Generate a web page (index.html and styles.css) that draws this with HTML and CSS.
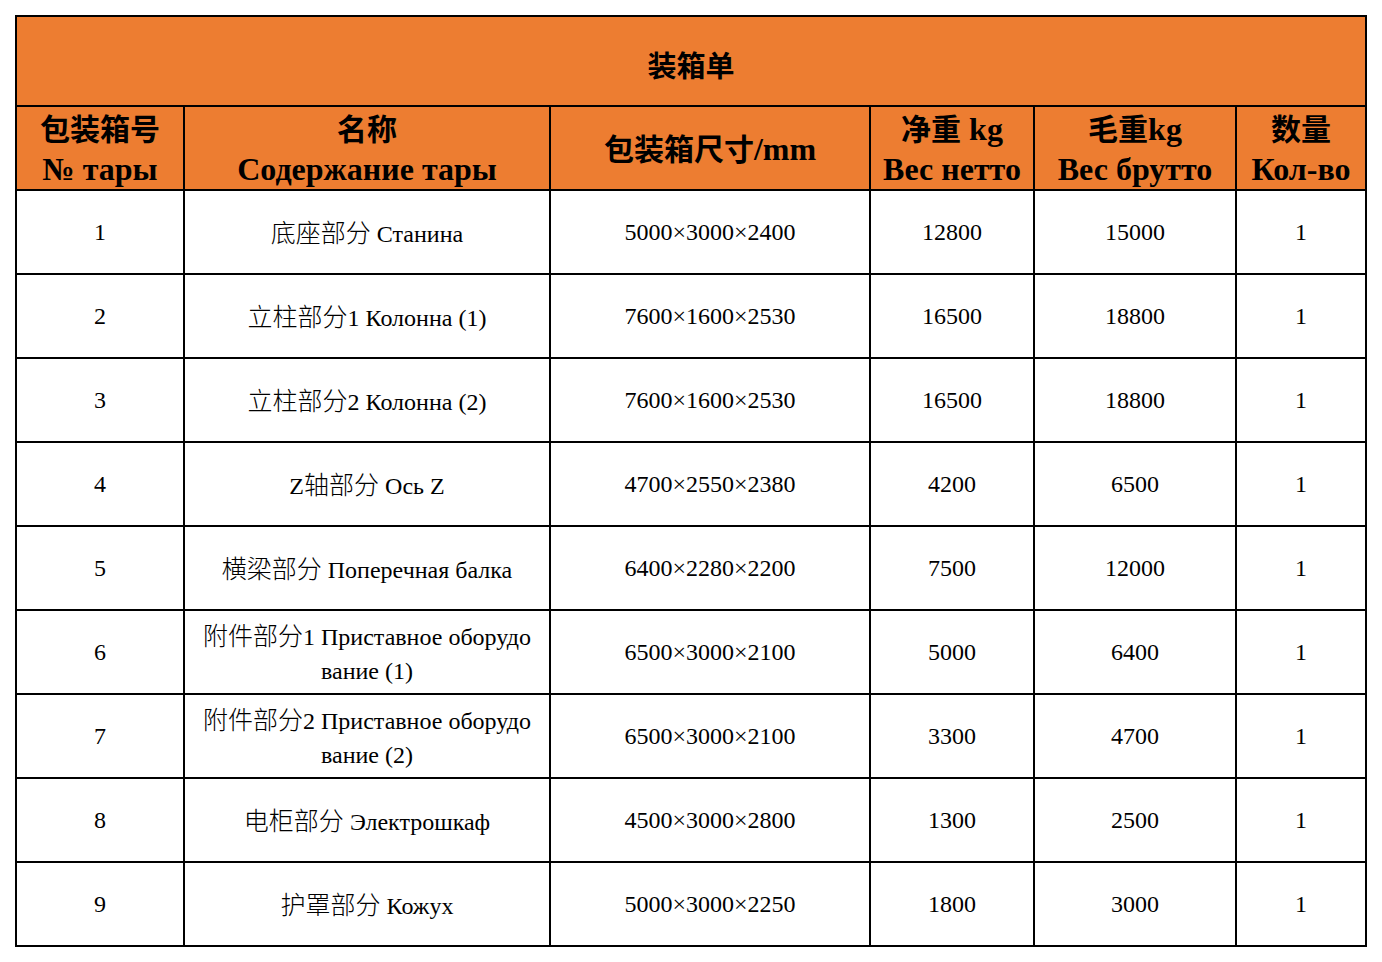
FILE: index.html
```html
<!DOCTYPE html>
<html>
<head>
<meta charset="utf-8">
<title>装箱单</title>
<link rel="stylesheet" href="styles.css">
</head>
<body>
<table class="packing">
  <colgroup>
    <col class="c1"><col class="c2"><col class="c3"><col class="c4"><col class="c5"><col class="c6">
  </colgroup>
  <thead>
    <tr class="title-row"><th colspan="6">装箱单</th></tr>
    <tr class="head-row">
      <th><span class="zh">包装箱号</span><br>№ тары</th>
      <th><span class="zh">名称</span><br>Содержание тары</th>
      <th><span class="zh">包装箱尺寸</span>/mm</th>
      <th><span class="zh">净重</span> kg<br>Вес нетто</th>
      <th><span class="zh">毛重</span>kg<br>Вес брутто</th>
      <th><span class="zh">数量</span><br>Кол-во</th>
    </tr>
  </thead>
  <tbody>
    <tr><td>1</td><td><span class="zh">底座部分</span> Станина</td><td>5000×3000×2400</td><td>12800</td><td>15000</td><td>1</td></tr>
    <tr><td>2</td><td><span class="zh">立柱部分</span>1 Колонна (1)</td><td>7600×1600×2530</td><td>16500</td><td>18800</td><td>1</td></tr>
    <tr><td>3</td><td><span class="zh">立柱部分</span>2 Колонна (2)</td><td>7600×1600×2530</td><td>16500</td><td>18800</td><td>1</td></tr>
    <tr><td>4</td><td>Z<span class="zh">轴部分</span> Ось Z</td><td>4700×2550×2380</td><td>4200</td><td>6500</td><td>1</td></tr>
    <tr><td>5</td><td><span class="zh">横梁部分</span> Поперечная балка</td><td>6400×2280×2200</td><td>7500</td><td>12000</td><td>1</td></tr>
    <tr><td>6</td><td class="wrap"><span class="zh">附件部分</span>1 Приставное оборудо<br>вание (1)</td><td>6500×3000×2100</td><td>5000</td><td>6400</td><td>1</td></tr>
    <tr><td>7</td><td class="wrap"><span class="zh">附件部分</span>2 Приставное оборудо<br>вание (2)</td><td>6500×3000×2100</td><td>3300</td><td>4700</td><td>1</td></tr>
    <tr><td>8</td><td><span class="zh">电柜部分</span> Электрошкаф</td><td>4500×3000×2800</td><td>1300</td><td>2500</td><td>1</td></tr>
    <tr><td>9</td><td><span class="zh">护罩部分</span> Кожух</td><td>5000×3000×2250</td><td>1800</td><td>3000</td><td>1</td></tr>
  </tbody>
</table>
</body>
</html>
```
FILE: styles.css
```css
html, body {
  margin: 0;
  padding: 0;
  background: #ffffff;
}
body {
  padding: 15px 0 0 15px;
  font-family: "Liberation Serif", "Times New Roman", serif;
  color: #000;
}
.zh {
  font-family: "Noto Sans CJK SC", sans-serif;
}
.packing {
  border-collapse: collapse;
  table-layout: fixed;
  width: 1350px;
}
.c1 { width: 168px; }
.c2 { width: 366px; }
.c3 { width: 320px; }
.c4 { width: 164px; }
.c5 { width: 202px; }
.c6 { width: 130px; }
.packing th,
.packing td {
  border: 2px solid #000;
  text-align: center;
  vertical-align: middle;
  padding: 0;
  font-family: "Liberation Serif", "Times New Roman", serif;
}
.packing th {
  background: #ed7d31;
  font-weight: bold;
}
.title-row th {
  height: 82px;
  padding-top: 6px;
  font-size: 29px;
  font-family: "Noto Sans CJK SC", sans-serif;
}
.head-row th {
  height: 82px;
  font-size: 32px;
  line-height: 40px;
}
.head-row th .zh {
  font-size: 30px;
}
.packing td {
  height: 82px;
  font-size: 24px;
  line-height: 34px;
  white-space: nowrap;
}
.packing td .zh {
  font-size: 25px;
  font-weight: 300;
}
```
